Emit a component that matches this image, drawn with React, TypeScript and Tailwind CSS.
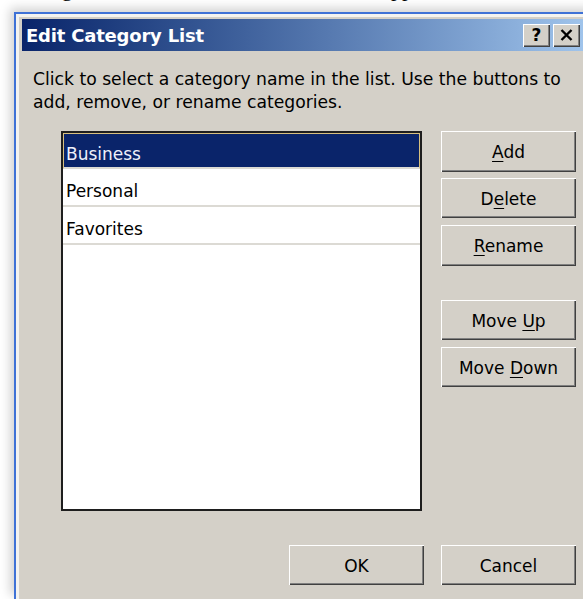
import type { ReactNode } from "react";

// Classic raised 3D button edge: white top-left, dark bottom-right.
const raised =
  "shadow-[inset_1px_1px_0_#ffffff,inset_-1px_-1px_0_#404040,inset_-2px_-2px_0_#808080]";

function DialogButton({ children, className = "" }: { children: ReactNode; className?: string }) {
  return (
    <button
      type="button"
      className={`flex h-[40px] w-[135px] items-center justify-center bg-[#d4d0c8] pt-[3px] text-[17px] text-black ${raised} ${className}`}
    >
      <span className="whitespace-pre">{children}</span>
    </button>
  );
}

function Key({ children }: { children: ReactNode }) {
  return <span className="underline decoration-1 underline-offset-[3px]">{children}</span>;
}

const categories = ["Business", "Personal", "Favorites"];

export default function App() {
  return (
    <div className="relative flex h-[599px] w-[583px] flex-col overflow-hidden bg-white font-['DejaVu_Sans',sans-serif]">
      {/* tail of the paragraph above the dialog */}
      <div className="h-[12px] shrink-0 overflow-hidden">
        <p className="-mt-[24px] whitespace-nowrap pl-[20px] font-['Liberation_Serif',serif] text-[22px] leading-[26px] text-black">
          Using the Outlook Edit Menu within the app, the list is shown
        </p>
      </div>

      <div className="ml-[14px] flex w-[590px] flex-1 flex-col border-l-2 border-t-2 border-[#3f72d6] shadow-[-4px_-4px_10px_rgba(0,0,0,0.18)]">
        <div className="flex flex-1 flex-col border-l-[3px] border-t-[3px] border-[#f4f3ef] bg-[#d4d0c8] pl-[3px] pt-[2px]">
          {/* title bar */}
          <div className="flex h-[32px] shrink-0 items-center bg-gradient-to-r from-[#0a246a] to-[#a6caf0] pl-[4px] pr-[24px]">
            <span className="text-[18px] font-bold tracking-[-0.2px] text-white">Edit Category List</span>
            <div className="ml-auto flex gap-[3px]">
              <span className={`flex h-[23px] w-[27px] items-center justify-center bg-[#d4d0c8] text-[17px] font-bold leading-none text-black ${raised}`}>
                ?
              </span>
              <span className={`flex h-[23px] w-[27px] items-center justify-center bg-[#d4d0c8] ${raised}`}>
                <svg width="13" height="12" viewBox="0 0 13 12">
                  <path d="M1.5 1 L11.5 11 M11.5 1 L1.5 11" stroke="#000" strokeWidth="2.4" />
                </svg>
              </span>
            </div>
          </div>

          {/* body */}
          <div className="flex flex-col pl-[11px] pt-[17px]">
            <p className="w-[540px] text-[17.2px] leading-[23px] text-black">
              Click to select a category name in the list. Use the buttons to add, remove, or rename
              categories.
            </p>

            <div className="ml-[28px] mt-[17px] flex gap-[19px]">
              <div className="h-[380px] w-[361px] border-2 border-[#1e1e1e] bg-white">
                {categories.map((name, i) => (
                  <div
                    key={name}
                    className={
                      i === 0
                        ? "flex h-[36px] items-center border border-b-2 border-[#d8c080] border-b-[#dcdad4] bg-[#0a246a] pl-[2px] pt-[8px] text-[17px] text-[#eef0fa]"
                        : "flex h-[38px] items-center border-b-2 border-[#dcdad4] pl-[3px] pt-[10px] text-[17px] text-black"
                    }
                  >
                    {name}
                  </div>
                ))}
              </div>

              <div className="flex flex-col">
                <DialogButton className="h-[41px]">
                  <Key>A</Key>dd
                </DialogButton>
                <DialogButton className="mt-[6px]">
                  D<Key>e</Key>lete
                </DialogButton>
                <DialogButton className="mt-[7px] h-[41px]">
                  <Key>R</Key>ename
                </DialogButton>
                <DialogButton className="mt-[34px]">
                  Move <Key>U</Key>p
                </DialogButton>
                <DialogButton className="mt-[7px]">
                  Move <Key>D</Key>own
                </DialogButton>
              </div>
            </div>

            <div className="ml-[28px] mt-[34px] flex w-[515px] justify-end gap-[17px]">
              <DialogButton>OK</DialogButton>
              <DialogButton>Cancel</DialogButton>
            </div>
          </div>
        </div>
      </div>
    </div>
  );
}
